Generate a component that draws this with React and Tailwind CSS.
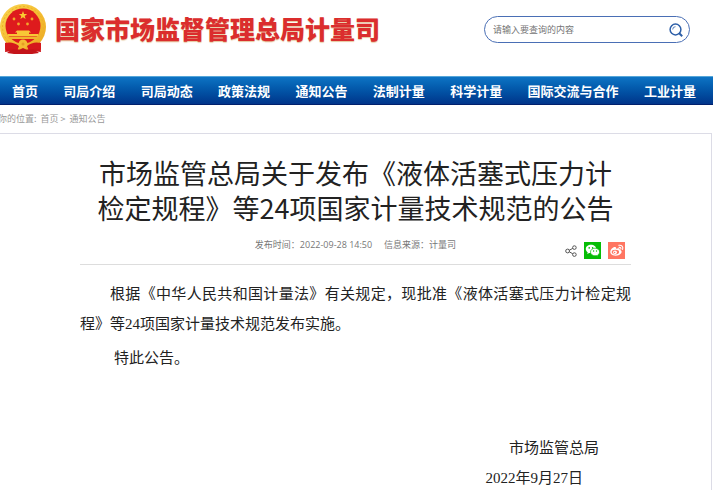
import React from "react";

const navItems = [
  "首页",
  "司局介绍",
  "司局动态",
  "政策法规",
  "通知公告",
  "法制计量",
  "科学计量",
  "国际交流与合作",
  "工业计量",
];

const Emblem = () => (
  <svg viewBox="0 0 46 54" className="w-[46px] h-[54px] shrink-0" aria-hidden="true">
    <defs>
      <linearGradient id="gold" x1="0" y1="0" x2="1" y2="1">
        <stop offset="0" stopColor="#f9d552" />
        <stop offset="0.5" stopColor="#f5bf33" />
        <stop offset="1" stopColor="#eaa822" />
      </linearGradient>
    </defs>
    <path d="M6 40 L5 52 L13 51 L14 54 H32 L33 51 L41 52 L40 40 Z" fill="#cf171b" />
    <circle cx="23" cy="27" r="23" fill="url(#gold)" />
    <circle cx="23" cy="27" r="20.5" fill="none" stroke="#eeb02a" strokeWidth="1" strokeDasharray="2 2" />
    <circle cx="23" cy="26" r="17.5" fill="#de1b1d" />
    <path
      fill="#f9c932"
      d="M23 11 L24.1 14 L27.2 14 L24.7 15.9 L25.6 19 L23 17.2 L20.4 19 L21.3 15.9 L18.8 14 L21.9 14 Z"
    />
    <g fill="#f3a72c">
      <circle cx="14" cy="19" r="1.4" />
      <circle cx="32" cy="19" r="1.4" />
      <circle cx="18.5" cy="24" r="1.4" />
      <circle cx="27.5" cy="24" r="1.4" />
    </g>
    <path fill="#f8c736" d="M17 30.5 H29 L31 32.5 H29 V34 H38 V36 H8 V34 H17 V32.5 H15 Z" />
    <path fill="#f1b52e" d="M7 36.5 H39 L37 39 H9 Z" />
    <path d="M5 43 Q13 41 19 46 L17 51 Q11 47 5 50 Z M41 43 Q33 41 27 46 L29 51 Q35 47 41 50 Z" fill="#d5181c" />
    <circle cx="23" cy="44" r="4.5" fill="#f5bd33" />
    <circle cx="23" cy="44" r="1.5" fill="#e5a024" />
    <path d="M7 53 Q12 48 19 50 L23 48 L27 50 Q34 48 39 53 L32 54 H14 Z" fill="#c4141a" />
  </svg>
);

const SearchIcon = () => (
  <svg viewBox="0 0 14 14" className="w-3.5 h-3.5" fill="none" stroke="#2d5fa8">
    <circle cx="6.5" cy="6.5" r="5.4" strokeWidth="1.5" />
    <path d="M3.7 6.5 A2.8 2.8 0 0 1 6.5 3.7" strokeWidth="0.8" />
    <path d="M10 10 L13.2 13.2" strokeWidth="2" />
  </svg>
);

const ShareIcon = () => (
  <svg viewBox="0 0 12 12" className="w-3 h-3" fill="none" stroke="#555">
    <circle cx="2.6" cy="6" r="1.9" />
    <circle cx="9.4" cy="2.6" r="1.8" />
    <circle cx="9.4" cy="9.6" r="1.8" />
    <path d="M4.3 5.2 L7.8 3.4 M4.3 6.8 L7.8 8.8" />
  </svg>
);

const WechatIcon = () => (
  <svg viewBox="0 0 17 17" className="w-[17px] h-[17px]">
    <path
      fill="#fff"
      d="M7 2.8 C4 2.8 1.8 4.7 1.8 7 C1.8 8.4 2.6 9.5 3.7 10.3 L3.2 12 L5.2 10.9 C5.8 11.1 6.4 11.1 7 11.1 C10 11.1 12.2 9.3 12.2 7 C12.2 4.7 10 2.8 7 2.8 Z"
    />
    <path
      fill="#fff"
      stroke="#06bd06"
      strokeWidth="0.7"
      d="M11 6.2 C8.5 6.2 6.5 7.9 6.5 10 C6.5 12.1 8.5 13.8 11 13.8 C11.5 13.8 12 13.7 12.5 13.6 L14.1 14.5 L13.7 13 C14.9 12.3 15.6 11.2 15.6 10 C15.6 7.9 13.5 6.2 11 6.2 Z"
    />
    <g fill="#06bd06">
      <circle cx="5.2" cy="5.9" r="0.8" />
      <circle cx="8.6" cy="5.9" r="0.8" />
      <circle cx="9.6" cy="9" r="0.7" />
      <circle cx="12.5" cy="9" r="0.7" />
    </g>
  </svg>
);

const WeiboIcon = () => (
  <svg viewBox="0 0 17 17" className="w-[17px] h-[17px]">
    <path
      fill="#fff"
      d="M7.2 5 C5.5 4.4 2.4 7.2 2.3 9.8 C2.2 12.3 4.8 13.7 7.6 13.7 C11 13.7 13.6 11.8 13.6 9.8 C13.6 8.6 12.6 8 11.7 7.7 C12 6.2 10.4 5.9 8 6.8 C8.4 5.8 8.1 5.3 7.2 5 Z"
    />
    <ellipse cx="7.4" cy="10.1" rx="3.7" ry="2.4" fill="#ff7662" />
    <circle cx="7" cy="10.3" r="1.9" fill="#fff" />
    <circle cx="6.6" cy="10.5" r="0.8" fill="#ff7662" />
    <path
      d="M10.8 3.3 C13.6 2.7 15.5 4.9 14.6 7.4 M11.1 5.4 C12.4 5.1 13.2 6 12.8 7.1"
      fill="none"
      stroke="#fff"
      strokeWidth="1.1"
      strokeLinecap="round"
    />
  </svg>
);

const Header = () => (
  <header className="flex items-start justify-between pr-[23px] h-[76px]">
    <div className="flex items-start gap-[9px]">
      <Emblem />
      <span className="pt-2.5 text-[25px] leading-9 font-black text-[#db2d2d] whitespace-nowrap [text-shadow:0_1px_1px_#e5c9a0]">
        国家市场监督管理总局计量司
      </span>
    </div>
    <form
      role="search"
      onSubmit={(e) => e.preventDefault()}
      className="mt-4 flex items-center w-[206px] h-[27px] pl-2 pr-1.5 border border-[#4a6fb5] rounded-full"
    >
      <input
        type="text"
        aria-label="搜索"
        placeholder="请输入要查询的内容"
        className="flex-1 min-w-0 text-[9px] leading-4 outline-none placeholder:text-[#757575]"
      />
      <button type="submit" aria-label="搜索">
        <SearchIcon />
      </button>
    </form>
  </header>
);

const Nav = () => (
  <nav className="border-t border-t-[#56a6d8] border-b border-b-[#00206c] bg-linear-to-b from-[#0e74c4] to-[#01358a]">
    <ul className="flex justify-between pl-3 pr-[17px] text-[13px] leading-[27px] font-bold text-white whitespace-nowrap">
      {navItems.map((item) => (
        <li key={item}>
          <a href="#">{item}</a>
        </li>
      ))}
    </ul>
  </nav>
);

const App = () => {
  return (
    <div className="bg-white font-['Noto_Sans_CJK_SC','Noto_Sans',sans-serif]">
      <Header />
      <Nav />

      <div className="-ml-0.5 flex text-[9px] leading-7 text-[#999999] whitespace-nowrap">
        <span>你的位置:</span>
        <a href="#" className="ml-1">首页</a>
        <span className="ml-0.5">&gt;</span>
        <a href="#" className="ml-1">通知公告</a>
      </div>

      <article className="mr-px border-t border-r border-[#dcdce6] px-20 pt-[21px]">
        <h1 className="-mx-2 text-[27px] leading-[35px] font-normal text-center text-[#222222]">
          市场监管总局关于发布《液体活塞式压力计
          <br />
          检定规程》等24项国家计量技术规范的公告
        </h1>

        {/* Meta and share row */}
        <div className="grid grid-cols-[1fr_auto_1fr] h-10 border-b border-[#dddddd]">
          <p className="col-start-2 pt-3 flex gap-3 font-['Open_Sans','Noto_Sans_CJK_SC',sans-serif] text-[9px] leading-4 text-[#777777] whitespace-nowrap">
            <span>发布时间：2022-09-28 14:50</span>
            <span>信息来源：计量司</span>
          </p>
          <div className="flex items-center justify-end gap-[7px] pt-3 pr-1.5">
            <button aria-label="分享">
              <ShareIcon />
            </button>
            <button aria-label="微信" className="bg-[#06bd06]">
              <WechatIcon />
            </button>
            <button aria-label="微博" className="bg-[#ff7662]">
              <WeiboIcon />
            </button>
          </div>
        </div>

        {/* Body */}
        <div className="pt-3.5 font-['Liberation_Serif','Noto_Sans_CJK_SC',serif] text-[15px] leading-[30px] text-[#222222]">
          <p className="indent-[30px] text-justify">
            根据《中华人民共和国计量法》有关规定，现批准《液体活塞式压力计检定规程》等24项国家计量技术规范发布实施。
          </p>
          <p className="indent-[34px] mt-1">特此公告。</p>
          <p className="mt-[60px] pr-8 text-right">市场监管总局</p>
          <p className="pr-12 text-right">2022年9月27日</p>
        </div>
      </article>
    </div>
  );
};

export default App;
